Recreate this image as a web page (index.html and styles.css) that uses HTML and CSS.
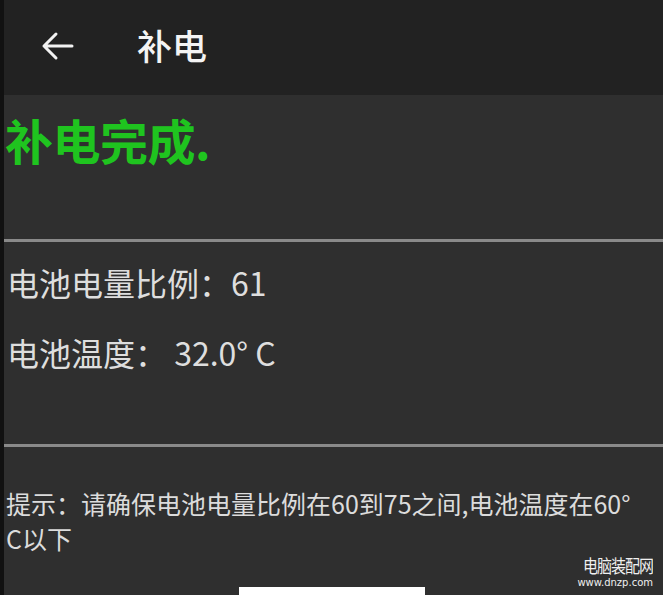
FILE: index.html
```html
<!DOCTYPE html>
<html lang="zh-CN">
<head>
<meta charset="utf-8">
<link rel="stylesheet" href="styles.css">
</head>
<body>
<div class="screen">
  <header class="appbar">
    <svg class="back" width="34" height="30" viewBox="0 0 34 30" aria-hidden="true">
      <path d="M32 15H4M16 3L4 15l12 12" fill="none" stroke="#f2f2f2" stroke-width="3" stroke-linecap="round" stroke-linejoin="round"/>
    </svg>
    <span class="title">补电</span>
  </header>
  <main class="content">
    <section class="status">
      <div class="done">补电完成.</div>
    </section>
    <hr class="divider">
    <section class="info">
      <div class="row">电池电量比例：61</div>
      <div class="row">电池温度： 32.0° C</div>
    </section>
    <hr class="divider">
    <section class="tip">提示：请确保电池电量比例在60到75之间,电池温度在60°C以下</section>
    <div class="footer">
      <div class="button"></div>
    </div>
  </main>
  <div class="watermark">
    <div class="wm-cn">电脑装配网</div>
    <div class="wm-en">www.dnzp.com</div>
  </div>
</div>
</body>
</html>
```

FILE: styles.css
```css
html, body {
  margin: 0;
  padding: 0;
  height: 100%;
  background: #2f2f2f;
  overflow: hidden;
}
.screen {
  position: relative;
  height: 595px;
  border-left: 4px solid #111;
  box-sizing: border-box;
  font-family: "Noto Sans CJK SC", "Noto Sans", sans-serif;
  display: flex;
  flex-direction: column;
}
.appbar {
  height: 95px;
  flex: none;
  background: #222222;
  display: flex;
  align-items: center;
  padding-left: 36px;
  box-sizing: border-box;
}
.back {
  display: block;
  margin-top: -4px;
}
.title {
  margin-left: 63px;
  color: #f4f4f4;
  font-size: 35px;
  font-weight: 500;
  line-height: 1;
  margin-top: -6px;
}
.content {
  flex: 1;
  display: flex;
  flex-direction: column;
}
.status {
  height: 144px;
  padding-top: 20px;
  padding-left: 1px;
  box-sizing: border-box;
}
.done {
  color: #1fc41f;
  font-size: 48px;
  font-weight: 700;
  line-height: 1;
  letter-spacing: -0.5px;
}
.divider {
  margin: 0;
  border: 0;
  height: 3px;
  background: #8a8a8a;
}
.info {
  height: 202px;
  padding-top: 23px;
  padding-left: 3px;
  box-sizing: border-box;
  display: flex;
  flex-direction: column;
  gap: 36px;
}
.row {
  color: #dedede;
  font-size: 32px;
  line-height: 34px;
}
.tip {
  padding-top: 39px;
  padding-left: 2px;
  padding-right: 20px;
  color: #dcdcdc;
  font-size: 25px;
  line-height: 35px;
  letter-spacing: 0;
  word-break: break-all;
}
.footer {
  flex: 1;
  display: flex;
  justify-content: center;
  align-items: flex-end;
}
.button {
  width: 186px;
  height: 8px;
  margin-right: 4px;
  background: #ffffff;
}
.watermark {
  position: absolute;
  right: 10px;
  bottom: 5px;
  text-align: right;
  color: #f0f0f0;
  font-family: "Noto Sans CJK SC", sans-serif;
}
.wm-cn {
  font-size: 15px;
  line-height: 21px;
  letter-spacing: -1px;
  transform: scaleY(1.2);
}
.wm-en {
  font-family: "DejaVu Sans", sans-serif;
  font-size: 10px;
  line-height: 14px;
  letter-spacing: 0;
}
```
